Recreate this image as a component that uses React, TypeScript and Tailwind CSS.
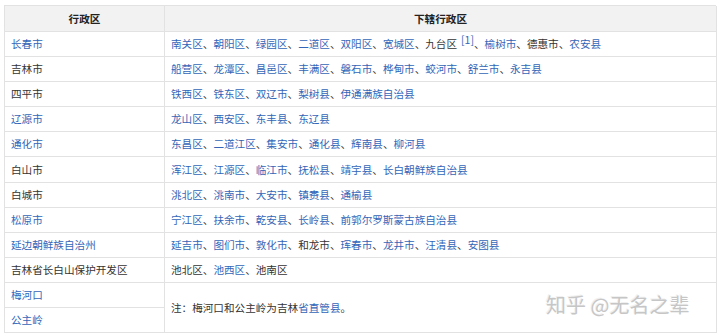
type Item = { t: string; link?: boolean; sup?: string };

const L = (t: string): Item => ({ t, link: true });
const B = (t: string): Item => ({ t });

const rows: { name: Item; items: Item[] }[] = [
  {
    name: L("长春市"),
    items: [
      L("南关区"),
      L("朝阳区"),
      L("绿园区"),
      L("二道区"),
      L("双阳区"),
      L("宽城区"),
      { t: "九台区", sup: "[1]" },
      L("榆树市"),
      B("德惠市"),
      L("农安县"),
    ],
  },
  {
    name: B("吉林市"),
    items: ["船营区", "龙潭区", "昌邑区", "丰满区", "磐石市", "桦甸市", "蛟河市", "舒兰市", "永吉县"].map(L),
  },
  { name: B("四平市"), items: ["铁西区", "铁东区", "双辽市", "梨树县", "伊通满族自治县"].map(L) },
  { name: L("辽源市"), items: ["龙山区", "西安区", "东丰县", "东辽县"].map(L) },
  { name: L("通化市"), items: ["东昌区", "二道江区", "集安市", "通化县", "辉南县", "柳河县"].map(L) },
  { name: B("白山市"), items: ["浑江区", "江源区", "临江市", "抚松县", "靖宇县", "长白朝鲜族自治县"].map(L) },
  { name: B("白城市"), items: ["洮北区", "洮南市", "大安市", "镇赉县", "通榆县"].map(L) },
  { name: L("松原市"), items: ["宁江区", "扶余市", "乾安县", "长岭县", "前郭尔罗斯蒙古族自治县"].map(L) },
  {
    name: L("延边朝鲜族自治州"),
    items: [L("延吉市"), L("图们市"), L("敦化市"), B("和龙市"), L("珲春市"), L("龙井市"), L("汪清县"), L("安图县")],
  },
  { name: B("吉林省长白山保护开发区"), items: [B("池北区"), L("池西区"), B("池南区")] },
];

function Cell({ item }: { item: Item }) {
  return (
    <>
      <span className={item.link ? "text-[#3366b8]" : "text-[#333]"}>{item.t}</span>
      {item.sup && (
        <span className="ml-[4px] text-[10.5px] text-[#3366b8] relative -top-[4px]">{item.sup}</span>
      )}
    </>
  );
}

export default function App() {
  return (
    <div
      className="relative w-[720px] h-[336px] bg-white pt-[5px] pl-[4px] text-[10.6px] text-[#333]"
      style={{ fontFamily: '"Noto Sans CJK SC", "Noto Sans", sans-serif' }}
    >
      <div className="grid w-[712px] grid-cols-[160px_552px] grid-rows-[26px_repeat(12,25.1px)] border-t border-l border-[#e2e2e2]">
        <div className="flex items-center justify-center bg-[#f2f2f2] border-r border-b border-[#e2e2e2] font-bold text-[#222]">
          行政区
        </div>
        <div className="flex items-center justify-center bg-[#f2f2f2] border-r border-b border-[#e2e2e2] font-bold text-[#222]">
          下辖行政区
        </div>
        {rows.map((r) => (
          <div key={r.name.t} className="contents">
            <div className="flex items-center px-[6px] border-r border-b border-[#e2e2e2]">
              <Cell item={r.name} />
            </div>
            <div className="flex items-center px-[6px] border-r border-b border-[#e2e2e2] whitespace-nowrap">
              {r.items.map((it, i) => (
                <span key={it.t} className="flex items-center">
                  <Cell item={it} />
                  {i < r.items.length - 1 && <span className="text-[#333]">、</span>}
                </span>
              ))}
            </div>
          </div>
        ))}
        <div className="flex items-center px-[6px] border-r border-b border-[#e2e2e2]">
          <span className="text-[#3366b8]">梅河口</span>
        </div>
        <div className="row-span-2 flex items-center px-[6px] border-r border-b border-[#e2e2e2]">
          <span>
            注：梅河口和公主岭为吉林<span className="text-[#3366b8]">省直管县</span>。
          </span>
        </div>
        <div className="flex items-center px-[6px] border-r border-b border-[#e2e2e2]">
          <span className="text-[#3366b8]">公主岭</span>
        </div>
      </div>
      <div
        className="absolute left-[546px] top-[291px] text-[20px] leading-[28px] text-[#c6c6c6]"
        style={{ textShadow: "1px 1px 0 #fff, -1px -1px 0 #f0f0f0" }}
      >
        知乎 @无名之辈
      </div>
    </div>
  );
}
